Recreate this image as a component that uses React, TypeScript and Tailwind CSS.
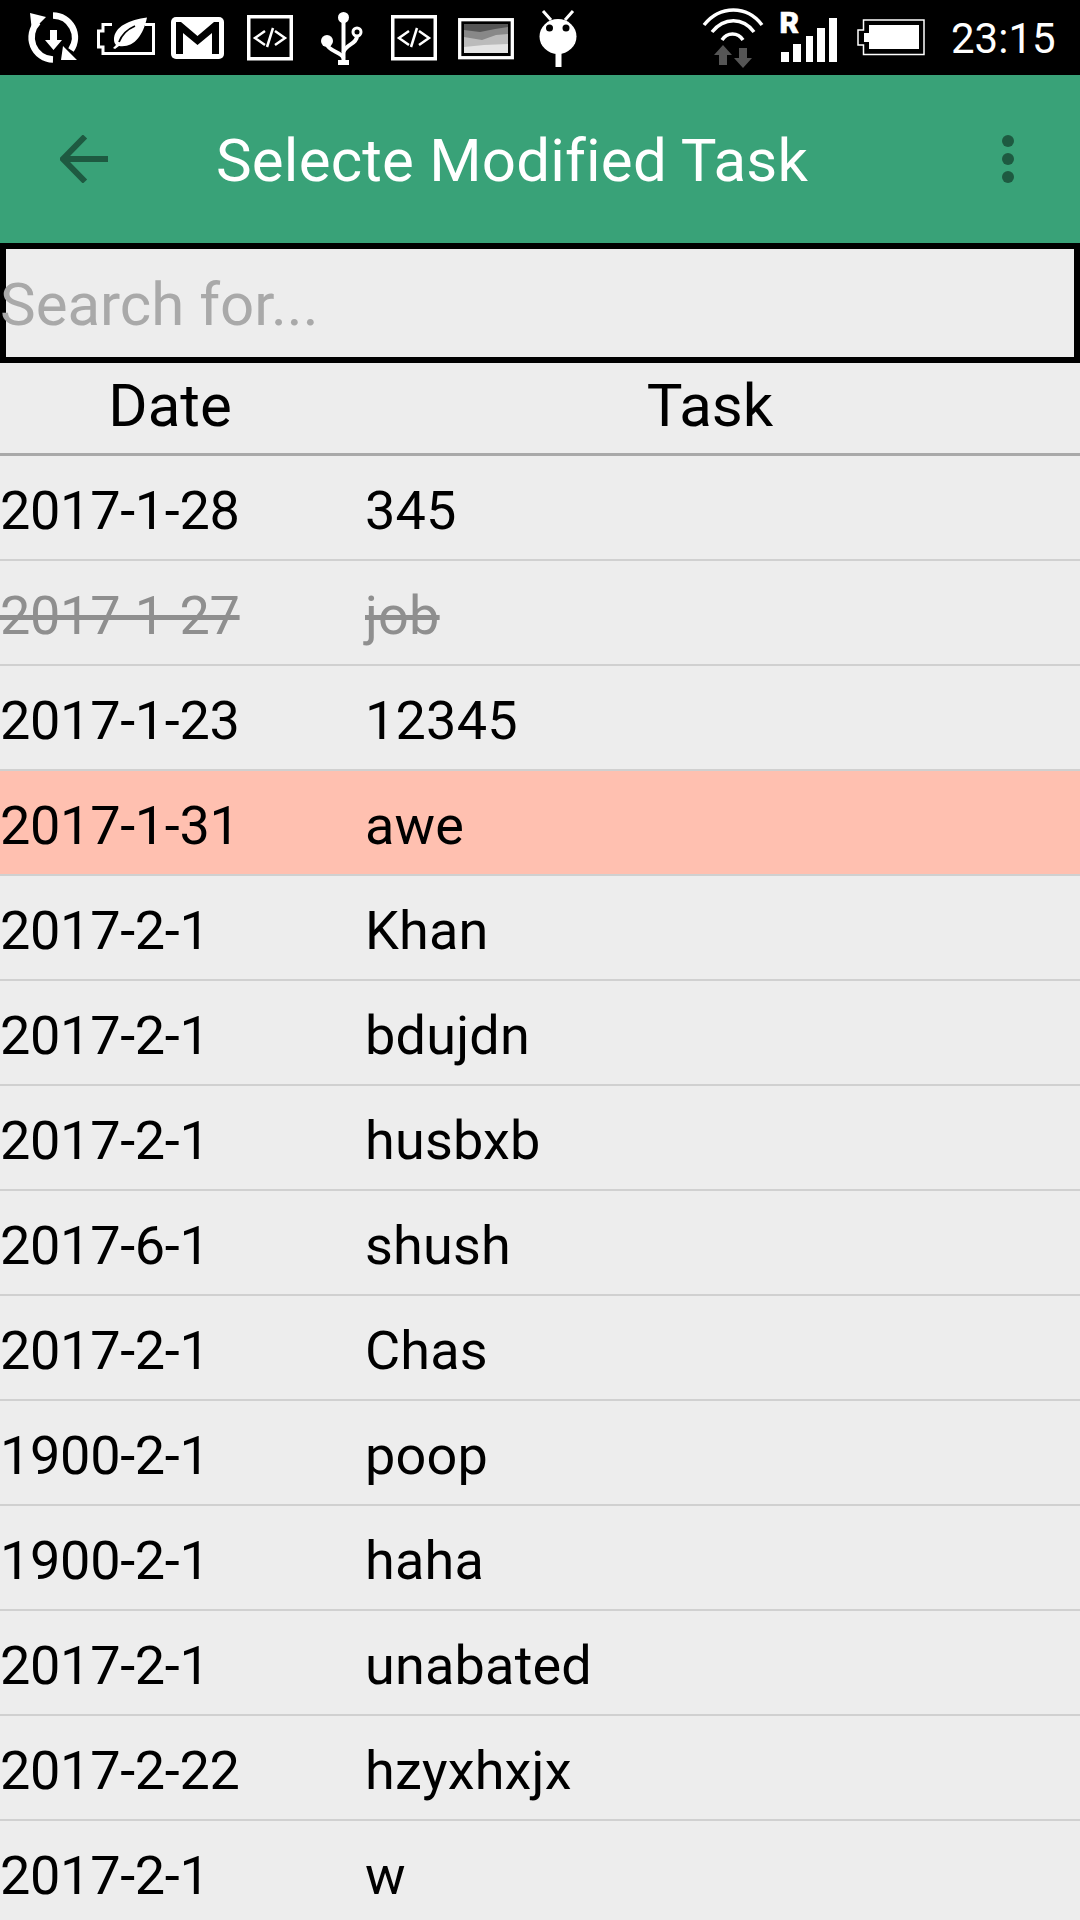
const font = { fontFamily: "Roboto, sans-serif" };

const rows: { d: string; t: string; kind?: "done" | "late" }[] = [
  { d: "2017-1-28", t: "345" },
  { d: "2017-1-27", t: "job", kind: "done" },
  { d: "2017-1-23", t: "12345" },
  { d: "2017-1-31", t: "awe", kind: "late" },
  { d: "2017-2-1", t: "Khan" },
  { d: "2017-2-1", t: "bdujdn" },
  { d: "2017-2-1", t: "husbxb" },
  { d: "2017-6-1", t: "shush" },
  { d: "2017-2-1", t: "Chas" },
  { d: "1900-2-1", t: "poop" },
  { d: "1900-2-1", t: "haha" },
  { d: "2017-2-1", t: "unabated" },
  { d: "2017-2-22", t: "hzyxhxjx" },
  { d: "2017-2-1", t: "w" },
];

function CodeIcon({ x }: { x: number }) {
  return (
    <g transform={`translate(${x} 0)`}>
      <rect x="1.750" y="16.750" width="42.500" height="42" fill="none" stroke="#fff" strokeWidth="3.500" />
      <path d="M18 31 l-10 7 10 7 M28 31 l10 7 -10 7" fill="none" stroke="#fff" strokeWidth="2.500" />
      <path d="M20 47 l6-19" stroke="#fff" strokeWidth="2.500" />
    </g>
  );
}

function StatusLeft() {
  return (
    <svg width="600" height="75" viewBox="0 0 600 75" className="shrink-0">
      {/* sync */}
      <g fill="none" stroke="#fff" strokeWidth="6.500">
        <path d="M38 22 A22 22 0 0 0 53 59.500" />
        <path d="M53 15.500 A22 22 0 0 1 71 50" />
      </g>
      <path d="M30 13 L46 17 L32 31 Z M77 60 L61 60 L63 46 Z" fill="#fff" />
      <path d="M50 30 h7 v10 h5 l-8.500 10 -8.500 -10 h5z" fill="#fff" />
      {/* battery saver */}
      <path d="M112 24.500 H103 V31 H98.500 V47 H103 V53.500 H153.500 V24.500 H145" fill="none" stroke="#fff" strokeWidth="3" />
      <path d="M147 17.500 C130 20 114 26 114 40 C114 42 115 44 116 45 L113 48 L115 49 L119 46 C134 48 143 36 147 17.500Z" fill="#fff" />
      <path d="M119 42 C122 34 128 29 135 26" fill="none" stroke="#000" strokeWidth="1.800" />
      {/* gmail */}
      <rect x="171" y="17" width="53" height="42" rx="5" fill="#fff" />
      <path d="M176 22 H181 L197.500 36 L214 22 H219 V54 H212 V33 L197.500 45 L183 33 V54 H176Z" fill="#000" />
      <CodeIcon x={247} />
      {/* usb */}
      <g fill="none" stroke="#fff" strokeWidth="4">
        <path d="M343.500 18 V62" />
        <path d="M327 44 C328 51 341 52 343.500 58" />
        <path d="M357 36 C357 44 346 44 343.500 52" />
        <circle cx="357" cy="32" r="4" strokeWidth="3" />
      </g>
      <circle cx="343.500" cy="17.500" r="5.500" fill="#fff" />
      <circle cx="327" cy="41" r="6" fill="#fff" />
      <rect x="338" y="60" width="11" height="5" fill="#fff" />
      <CodeIcon x={391} />
      {/* image */}
      <rect x="459.700" y="19.700" width="52.600" height="38" fill="#000" stroke="#fff" strokeWidth="3.300" />
      <rect x="464" y="24" width="44" height="29" fill="#555" />
      <path d="M464 30 L480 32 L495 29 L508 27 V53 H464Z" fill="#888" />
      <path d="M464 37 L482 40 L496 35 L508 34 V53 H464Z" fill="#bbb" />
      <path d="M464 47 L484 45 L508 44 V53 H464Z" fill="#e4e4e4" />
      {/* android */}
      <ellipse cx="558" cy="36.500" rx="18.500" ry="17.500" fill="#fff" />
      <path d="M543 11 L551 20 M573 11 L565 20" stroke="#fff" strokeWidth="3" />
      <circle cx="549.500" cy="28" r="3.500" fill="#000" />
      <circle cx="566" cy="28" r="3.500" fill="#000" />
      <rect x="555.500" y="53" width="6" height="14" fill="#fff" />
    </svg>
  );
}

function StatusRight() {
  return (
    <svg width="250" height="75" viewBox="680 0 250 75" className="ml-[80px] shrink-0">
      {/* wifi */}
      <g fill="none" stroke="#fff" strokeWidth="3.500">
        <path d="M704 25 C720 5 747 5 762 25" />
        <path d="M712 32 C724 17 743 17 754 32" />
        <path d="M722 40 C727 32 738 32 743 40" />
      </g>
      <path d="M723 45 L732 55 H727 V65 H719 V55 H714Z" fill="#555" />
      <path d="M739 48 H747 V58 H752 L743 68 L734 58 H739Z" fill="#555" />
      {/* R */}
      <text x="779.500" y="33" fill="#fff" stroke="#fff" strokeWidth="0.600" fontSize="30" fontWeight="900" style={font}>R</text>
      <rect x="781" y="52" width="8" height="10" fill="#fff" />
      <rect x="793" y="44" width="8" height="18" fill="#fff" />
      <rect x="806" y="36" width="7" height="26" fill="#fff" />
      <rect x="817" y="28" width="8" height="34" fill="#fff" />
      <rect x="829" y="18" width="8" height="44" fill="#fff" />
      {/* battery */}
      <path d="M863.500 20 H924 V54.500 H863.500 V45 H858 V30 H863.500Z" fill="none" stroke="#fff" strokeWidth="1.500" />
      <path d="M869 25 H919 V49 H869 V42 H864 V33 H869Z" fill="#fff" />
    </svg>
  );
}

export default function App() {
  return (
    <div className="w-[1080px] h-[1920px] overflow-hidden bg-[#ededed] flex flex-col" style={font}>
      <div className="h-[75px] bg-black flex items-center shrink-0">
        <StatusLeft />
        <StatusRight />
        <span className="ml-[21px] text-[42px] leading-none text-white font-normal mb-[-2px]">23:15</span>
      </div>
      <div className="h-[168px] bg-[#39a278] flex items-center shrink-0 relative">
        <svg width="48" height="48" viewBox="0 0 48 48" className="ml-[60px] shrink-0">
          <path d="M48 24 H3 M25 1.500 L3 24 L25 46.500" fill="none" stroke="#1e5a41" strokeWidth="6" />
        </svg>
        <span className="ml-[108px] text-[60px] leading-none tracking-[0.2px] text-white mt-[3px]">Selecte Modified Task</span>
        <div className="absolute left-[1002px] top-[60px] flex flex-col gap-[6px]">
          <div className="w-3 h-3 rounded-full bg-[#1e5a41]" />
          <div className="w-3 h-3 rounded-full bg-[#1e5a41]" />
          <div className="w-3 h-3 rounded-full bg-[#1e5a41]" />
        </div>
      </div>
      <div className="h-[120px] border-[6px] border-black flex items-center shrink-0">
        <span className="-ml-[6px] mt-[4px] text-[60px] leading-none text-[#a9a9a9]">Search for...</span>
      </div>
      <div className="h-[93px] border-b-[3px] border-[#a9a9a9] flex items-center shrink-0 text-[60px] text-black leading-none">
        <div className="w-[340px] text-center -mt-[4px]">Date</div>
        <div className="flex-1 text-center -mt-[4px]">Task</div>
      </div>
      {rows.map((r, i) => (
        <div
          key={i}
          className={`h-[105px] shrink-0 border-b-2 border-[#d0d0d0] flex items-center text-[54px] leading-none ${
            r.kind === "late" ? "bg-[#ffc0b0]" : ""
          } ${r.kind === "done" ? "text-[#8f8f8f] line-through" : "text-black"}`}
        >
          <div className="w-[365px] shrink-0 pt-[6px] tracking-[-0.3px]">{r.d}</div>
          <div className="pt-[6px] tracking-[0.2px]">{r.t}</div>
        </div>
      ))}
    </div>
  );
}
